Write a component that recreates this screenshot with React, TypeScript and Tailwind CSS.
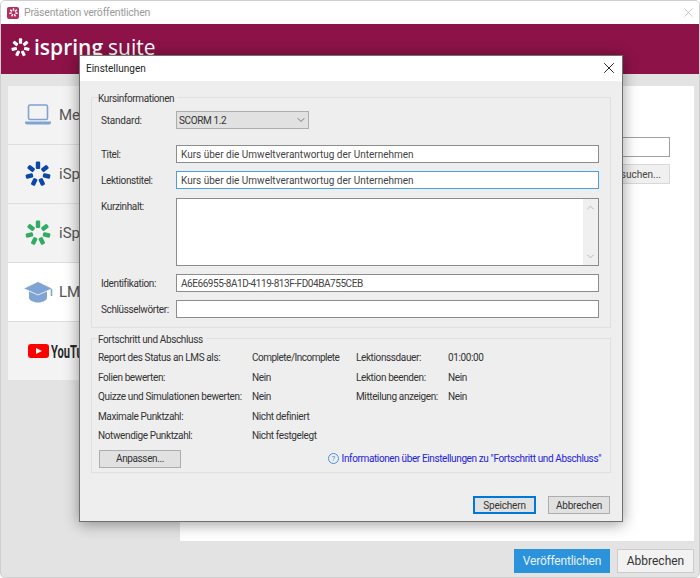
import { X, ChevronDown, ChevronUp } from 'lucide-react';

const uiFont = "font-['Roboto',sans-serif]";

function Petals({ className, size }: { className: string; size: number }) {
  const angles = [0, 51.4, 102.8, 154.3, 205.7, 257.1, 308.6];
  return (
    <svg width={size} height={size} viewBox="0 0 26 26" className={className}>
      {angles.map((a) => (
        <rect key={a} x="10.8" y="0.5" width="4.4" height="7.4" rx="1.2" fill="currentColor" transform={`rotate(${a} 13 13)`} />
      ))}
    </svg>
  );
}

function LaptopIcon() {
  return (
    <svg width="28" height="22" viewBox="0 0 28 22" fill="none">
      <rect x="4.5" y="1" width="19" height="14.5" rx="1.5" stroke="#7fa3d3" strokeWidth="1.6" />
      <path d="M1 17.5h26v1a2 2 0 0 1-2 2H3a2 2 0 0 1-2-2z" fill="#7fa3d3" />
    </svg>
  );
}

function CapIcon() {
  return (
    <svg width="30" height="24" viewBox="0 0 30 24">
      <path d="M6 10v8c0 2 4 4.500 9 4.500s9-2.500 9-4.500v-8z" fill="#7fa3d3" />
      <path d="M0.500 8.500 15 1.500l14.500 7L15 15z" fill="#7fa3d3" stroke="#fff" strokeWidth="0.8" />
      <path d="M28.500 9v7" stroke="#7fa3d3" strokeWidth="1.600" />
    </svg>
  );
}

function SideItem({ icon, label, active }: { icon: React.ReactNode; label: string; active?: boolean }) {
  return (
    <div className={`flex items-center h-[59px] border-b border-[#dedede] ${active ? 'bg-white' : 'bg-[#f3f3f3]'}`}>
      <div className="w-[51px] flex justify-center pl-[8px] shrink-0">{icon}</div>
      <span className="text-[15px] text-[#555] whitespace-nowrap">{label}</span>
    </div>
  );
}

function Field({ label, value, focused, mono }: { label: string; value?: string; focused?: boolean; mono?: boolean }) {
  return (
    <div className="flex items-center h-[18px]">
      <span className="w-[76px] pl-[1px] text-[#333] whitespace-nowrap tracking-[-0.38px]">{label}</span>
      <div className={`w-[423px] h-[18px] bg-white border flex items-center px-[4px] text-[#444] whitespace-nowrap ${mono ? 'tracking-[-0.44px]' : ''} ${focused ? 'border-[#4a9fe0]' : 'border-[#8c8c8c]'}`}>
        {value}
      </div>
    </div>
  );
}

const statusLeft = [
  ['Report des Status an LMS als:', 'Complete/Incomplete'],
  ['Folien bewerten:', 'Nein'],
  ['Quizze und Simulationen bewerten:', 'Nein'],
  ['Maximale Punktzahl:', 'Nicht definiert'],
  ['Notwendige Punktzahl:', 'Nicht festgelegt'],
];

const statusRight = [
  ['Lektionssdauer:', '01:00:00'],
  ['Lektion beenden:', 'Nein'],
  ['Mitteilung anzeigen:', 'Nein'],
];

export default function App() {
  const title = 'Kurs über die Umweltverantwortug der Unternehmen';

  return (
    <div className={`relative w-[700px] h-[578px] bg-white overflow-hidden ${uiFont}`}>
      <div className="w-full h-full flex flex-col border border-[#cfcfcf] rounded-[5px] overflow-hidden bg-[#e3e3e3]">
        {/* Window title */}
        <div className="h-[23px] bg-white flex items-center pl-[6px] pr-[3px] shrink-0">
          <div className="w-[12px] h-[12px] rounded-[2px] bg-[#b5305f] flex items-center justify-center">
            <Petals className="text-white" size={9} />
          </div>
          <span className="ml-[5px] text-[10.500px] tracking-[-0.2px] text-[#9a9a9a]">Präsentation veröffentlichen</span>
          <X className="ml-auto text-[#a8a8a8]" size={15} strokeWidth={1} />
        </div>

        {/* Brand header */}
        <div className="h-[50px] bg-[#8c1247] flex items-center pl-[10px] pb-[4px] shrink-0 text-white">
          <Petals className="text-white" size={19} />
          <span className="ml-[4px] text-[21px] leading-none font-['Open_Sans',sans-serif] font-semibold">ispring</span>
          <span className="ml-[5px] text-[21px] leading-none font-['Open_Sans',sans-serif]">suite</span>
        </div>

        {/* Body */}
        <div className="flex-1 flex pl-[7px] pr-[5px] pt-[12px] pb-[36px]">
          <div className="w-[172px] self-start">
            <SideItem icon={<LaptopIcon />} label="Mein Computer" />
            <SideItem icon={<Petals className="text-[#0b47a8]" size={26} />} label="iSpring Cloud" />
            <SideItem icon={<Petals className="text-[#32ab63]" size={26} />} label="iSpring Learn" />
            <SideItem icon={<CapIcon />} label="LMS" active />
            <div className="flex items-center h-[58px] bg-[#f3f3f3] pl-[20px]">
              <div className="w-[21px] h-[14px] rounded-[3px] bg-[#f00] flex items-center justify-center shrink-0">
                <div className="w-0 h-0 border-y-[3.500px] border-y-transparent border-l-[6px] border-l-white" />
              </div>
              <span className="ml-[2px] inline-block origin-left scale-x-[0.62] text-[#282828] text-[18px] font-bold whitespace-nowrap">YouTube</span>
            </div>
          </div>
          <div className="flex-1 bg-white flex flex-col items-end pt-[51px] pr-[24px] gap-[7px]">
            <div className="w-[300px] h-[20px] border border-[#a0a0a0]" />
            <div className="h-[20px] w-[100px] bg-[#f0f0f0] border border-[#d8d8d8] flex items-center justify-end pr-[8px] text-[10px] text-[#444]">
              Durchsuchen...
            </div>
          </div>
        </div>
      </div>

      {/* Footer buttons */}
      <div className="absolute left-[514px] top-[549px] flex gap-[7px] text-[12px]">
        <button className="w-[96px] h-[24px] bg-[#2b92dc] text-[#e6f2fb] tracking-[-0.2px]">Veröffentlichen</button>
        <button className="w-[77px] h-[24px] bg-[#f2f2f2] border border-[#cccccc] text-[#333]">Abbrechen</button>
      </div>

      {/* Settings dialog */}
      <div className="absolute left-[79px] top-[55px] w-[544px] h-[467px] flex flex-col bg-[#eeeeee] border border-[#707070] shadow-[0_2px_14px_rgba(0,0,0,0.4)] text-[10px] leading-[15px]">
        <div className="h-[25px] bg-white flex items-center justify-between pl-[6px] pr-[4px] shrink-0">
          <span className="text-[#222]">Einstellungen</span>
          <X className="text-[#222] mb-[2px]" size={18} strokeWidth={1.300} />
        </div>

        <div className="flex-1 flex flex-col px-[11px] pt-[8px]">
          <fieldset className="border border-[#e0e0e0] h-[239px] pl-[8px]">
            <legend className="ml-[-2px] pr-[3px] pt-[2px] text-[#333] tracking-[-0.38px]">Kursinformationen</legend>
            <div className="flex items-center h-[18px] mt-[5px]">
              <span className="w-[76px] pl-[1px] text-[#333] tracking-[-0.2px]">Standard:</span>
              <div className="w-[133px] h-[18px] bg-[#e1e1e1] border border-[#adadad] flex items-center justify-between px-[2px] text-[#333] tracking-[-0.38px]">
                SCORM 1.2
                <ChevronDown className="text-[#555] mr-[-1px]" size={12} strokeWidth={1.500} />
              </div>
            </div>
            <div className="flex flex-col gap-[8px] mt-[16px]">
              <Field label="Titel:" value={title} />
              <Field label="Lektionstitel:" value={title} focused />
              <div className="flex items-start mt-[1px]">
                <span className="w-[76px] pl-[1px] pt-[1px] text-[#333] tracking-[-0.38px]">Kurzinhalt:</span>
                <div className="w-[423px] h-[68px] bg-white border border-[#8c8c8c] flex justify-end">
                  <div className="w-[15px] bg-[#f0f0f0] flex flex-col justify-between items-center py-[3px] text-[#b0b0b0]">
                    <ChevronUp size={11} strokeWidth={2} />
                    <ChevronDown size={11} strokeWidth={2} />
                  </div>
                </div>
              </div>
              <Field label="Identifikation:" value="A6E66955-8A1D-4119-813F-FD04BA755CEB" mono />
              <Field label="Schlüsselwörter:" />
            </div>
          </fieldset>

          <fieldset className="border border-[#e0e0e0] h-[143px] mt-[2px] pl-[6px] tracking-[-0.38px]">
            <legend className="pr-[3px] pt-[2px] text-[#333]">Fortschritt und Abschluss</legend>
            <div className="flex mt-[1px] text-[#333]">
              <div className="w-[258px] grid grid-cols-[154px_1fr] auto-rows-[19.500px] items-center">
                {statusLeft.map(([k, v]) => (
                  <div key={k} className="contents">
                    <span className="whitespace-nowrap">{k}</span>
                    <span className={`whitespace-nowrap ${v.length > 16 ? 'tracking-[-0.5px]' : ''}`}>{v}</span>
                  </div>
                ))}
              </div>
              <div className="grid grid-cols-[92px_1fr] auto-rows-[19.500px] items-center self-start">
                {statusRight.map(([k, v]) => (
                  <div key={k} className="contents">
                    <span className="whitespace-nowrap">{k}</span>
                    <span className="whitespace-nowrap">{v}</span>
                  </div>
                ))}
              </div>
            </div>
            <div className="flex items-center justify-between mt-[4px] pr-[9px]">
              <button className="w-[82px] h-[18px] ml-[1px] bg-[#e1e1e1] border border-[#adadad] text-[#333]">Anpassen...</button>
              <span className="flex items-center gap-[3px] text-[#2222dd] whitespace-nowrap">
                <span className="w-[11px] h-[11px] rounded-full border border-[#4a8fe0] text-[8px] leading-none text-[#4a8fe0] flex items-center justify-center">?</span>
                Informationen über Einstellungen zu "Fortschritt und Abschluss"
              </span>
            </div>
          </fieldset>

          <div className="flex justify-end gap-[12px] mt-[23px] pr-[1px] tracking-[-0.2px]">
            <button className="w-[63px] h-[18px] bg-[#e1e1e1] border-2 border-[#0078d7] text-[#333]">Speichern</button>
            <button className="w-[62px] h-[18px] bg-[#e1e1e1] border border-[#adadad] text-[#333]">Abbrechen</button>
          </div>
        </div>
      </div>
    </div>
  );
}
